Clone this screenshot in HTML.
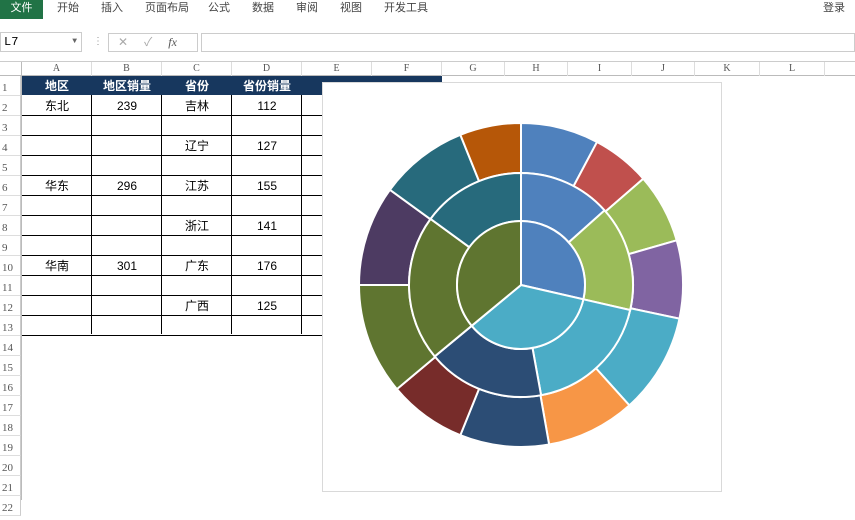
<!DOCTYPE html>
<html><head><meta charset="utf-8"><style>
body{margin:0;width:855px;height:500px;overflow:hidden;background:#fff;font-family:"Liberation Sans","Noto Sans CJK SC",sans-serif;position:relative}
.a{position:absolute}
.tab{position:absolute;top:0;height:18px;line-height:16px;font-size:11px;color:#444}
.ch{position:absolute;top:62px;height:14px;font-size:10px;color:#555;text-align:center;font-family:"Liberation Serif",serif;border-right:1px solid #ddd;line-height:14px}
.rh{position:absolute;left:0;width:21px;height:20px;font-size:11px;color:#555;font-family:"Liberation Serif",serif;padding-left:2px;line-height:24px;border-bottom:1px solid #ddd;box-sizing:border-box;border-right:1px solid #ccc}
.c{position:absolute;height:20px;line-height:20px;font-size:12px;text-align:center;color:#000}
.h{color:#fff;font-weight:bold}
</style></head><body>
<div class="a" style="left:0;top:0;width:43px;height:19px;background:#217346;color:#fff;font-size:11px;line-height:16px;text-align:center">文件</div>
<div class="tab" style="left:57px">开始</div><div class="tab" style="left:101px">插入</div><div class="tab" style="left:145px">页面布局</div><div class="tab" style="left:208px">公式</div><div class="tab" style="left:252px">数据</div><div class="tab" style="left:296px">审阅</div><div class="tab" style="left:340px">视图</div><div class="tab" style="left:384px">开发工具</div><div class="tab" style="left:823px">登录</div>
<div class="a" style="left:0;top:32px;width:82px;height:20px;border:1px solid #ccc;box-sizing:border-box;font-size:12px;line-height:18px;padding-left:3px;font-family:'Liberation Mono',monospace">L7<span style="position:absolute;right:4px;font-size:8px;color:#666">▼</span></div>
<div class="a" style="left:93px;top:36px;font-size:10px;color:#999">⋮</div>
<div class="a" style="left:108px;top:33px;width:90px;height:19px;border:1px solid #ccc;box-sizing:border-box;color:#aaa;font-size:12px;line-height:17px"><span style="margin-left:9px">✕</span><span style="margin-left:16px">✓</span><span style="margin-left:16px;font-style:italic;font-family:'Liberation Serif';color:#555">fx</span></div>
<div class="a" style="left:201px;top:33px;width:654px;height:19px;border:1px solid #ccc;box-sizing:border-box"></div>
<div class="a" style="left:0;top:61px;width:855px;height:1px;background:#ccc"></div>
<div class="a" style="left:0;top:75px;width:855px;height:1px;background:#bbb"></div>
<div class="a" style="left:21px;top:62px;width:1px;height:438px;background:#bbb"></div>
<div class="ch" style="left:22px;width:69px">A</div><div class="ch" style="left:92px;width:69px">B</div><div class="ch" style="left:162px;width:69px">C</div><div class="ch" style="left:232px;width:69px">D</div><div class="ch" style="left:302px;width:69px">E</div><div class="ch" style="left:372px;width:69px">F</div><div class="ch" style="left:442px;width:62px">G</div><div class="ch" style="left:505px;width:62px">H</div><div class="ch" style="left:568px;width:63px">I</div><div class="ch" style="left:632px;width:62px">J</div><div class="ch" style="left:695px;width:64px">K</div><div class="ch" style="left:760px;width:64px">L</div>
<div id="rows"></div>
<div class="a" style="left:22px;top:76px;width:420px;height:19px;background:#17375e"></div>
<div id="grid"></div>
<div class="c h" style="left:22px;top:76px;width:70px">地区</div><div class="c h" style="left:92px;top:76px;width:70px">地区销量</div><div class="c h" style="left:162px;top:76px;width:70px">省份</div><div class="c h" style="left:232px;top:76px;width:70px">省份销量</div>
<div class="c" style="left:22px;top:96px;width:70px">东北</div><div class="c" style="left:92px;top:96px;width:70px">239</div><div class="c" style="left:162px;top:96px;width:70px">吉林</div><div class="c" style="left:232px;top:96px;width:70px">112</div>
<div class="c" style="left:162px;top:136px;width:70px">辽宁</div><div class="c" style="left:232px;top:136px;width:70px">127</div>
<div class="c" style="left:22px;top:176px;width:70px">华东</div><div class="c" style="left:92px;top:176px;width:70px">296</div><div class="c" style="left:162px;top:176px;width:70px">江苏</div><div class="c" style="left:232px;top:176px;width:70px">155</div>
<div class="c" style="left:162px;top:216px;width:70px">浙江</div><div class="c" style="left:232px;top:216px;width:70px">141</div>
<div class="c" style="left:22px;top:256px;width:70px">华南</div><div class="c" style="left:92px;top:256px;width:70px">301</div><div class="c" style="left:162px;top:256px;width:70px">广东</div><div class="c" style="left:232px;top:256px;width:70px">176</div>
<div class="c" style="left:162px;top:296px;width:70px">广西</div><div class="c" style="left:232px;top:296px;width:70px">125</div>
<div class="a" style="left:322px;top:82px;width:398px;height:408px;background:#fff;border:1px solid #d9d9d9"></div>
<svg class="a" style="left:0;top:0" width="855" height="500" id="ch"></svg>
<script>
var rows='';for(var i=1;i<=22;i++){rows+='<div class="rh" style="top:'+(76+(i-1)*20)+'px">'+i+'</div>';}
document.getElementById('rows').innerHTML=rows;
var g='';var xs=[22,92,162,232,302];
for(var r=2;r<=13;r++){var y=76+(r-1)*20+19;g+='<div class="a" style="left:22px;top:'+y+'px;width:300px;height:1px;background:#000"></div>';}
xs.forEach(function(x,i){if(i>0)g+='<div class="a" style="left:'+(x-1)+'px;top:95px;width:1px;height:239px;background:#000"></div>';});
document.getElementById('grid').innerHTML=g;
var cx=521,cy=285;
function pt(r,a){a=a*Math.PI/180;return [cx+r*Math.sin(a),cy-r*Math.cos(a)];}
function seg(r0,r1,a0,a1,col){var p1=pt(r1,a0),p2=pt(r1,a1),L=(a1-a0)>180?1:0;var d='M'+p1+' A'+r1+','+r1+' 0 '+L+' 1 '+p2;
if(r0>0){var p3=pt(r0,a1),p4=pt(r0,a0);d+=' L'+p3+' A'+r0+','+r0+' 0 '+L+' 0 '+p4+' Z';}else d+=' L'+cx+','+cy+' Z';
return '<path d="'+d+'" fill="'+col+'" stroke="#fff" stroke-width="2"/>';}
function ring(r0,r1,vals,cols){var t=vals.reduce(function(a,b){return a+b}),a=0,s='';vals.forEach(function(v,i){var b=a+v/t*360;s+=seg(r0,r1,a,b,cols[i]);a=b;});return s;}
var s='';
s+=ring(112,162,[28,21,25,28,36,32,32,28,40,36,32,22],['#4f81bd','#c0504d','#9bbb59','#8064a2','#4bacc6','#f79646','#2c4d75','#772c2a','#5f7530','#4d3b62','#276a7c','#b65708']);
s+=ring(64,112,[112,127,155,141,176,125],['#4f81bd','#9bbb59','#4bacc6','#2c4d75','#5f7530','#276a7c']);
s+=ring(0,64,[239,296,301],['#4f81bd','#4bacc6','#5f7530']);
document.getElementById('ch').innerHTML=s;
</script>
</body></html>
